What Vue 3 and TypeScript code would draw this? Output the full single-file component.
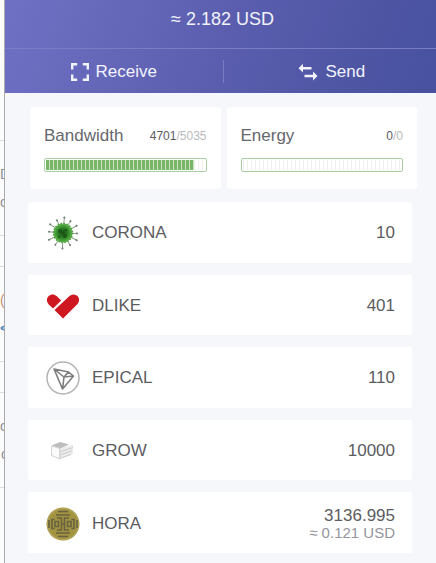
<script setup lang="ts">
interface Resource { name: string; used: number; total: number }
interface Token { name: string; balance: string; usd?: string }

const resources: Resource[] = [
  { name: 'Bandwidth', used: 4701, total: 5035 },
  { name: 'Energy', used: 0, total: 0 },
]

const tokens: Token[] = [
  { name: 'CORONA', balance: '10' },
  { name: 'DLIKE', balance: '401' },
  { name: 'EPICAL', balance: '110' },
  { name: 'GROW', balance: '10000' },
  { name: 'HORA', balance: '3136.995', usd: '≈ 0.121 USD' },
]

const percent = (r: Resource): number => (r.total ? (r.used / r.total) * 100 : 0)
const spikes: number[] = [5, 32, 62, 92, 118, 150, 182, 213, 244, 275, 304, 334]
</script>

<template>
  <div class="page">
    <div class="behind" aria-hidden="true">
      <div class="strip head"></div>
      <div class="strip tall"><span>D</span><span>c</span></div>
      <div class="strip short"></div>
      <div class="strip tall"><span class="orange">(</span><span class="blue">&lt;</span></div>
      <div class="strip short"></div>
      <div class="strip tall"><span>os</span><span class="inset">c</span></div>
      <div class="strip rest"></div>
    </div>

    <main class="panel">
      <header class="header">
        <div class="total">≈ 2.182 USD</div>
        <nav class="actions">
          <button type="button" class="action">
            <svg width="18" height="18" viewBox="0 0 18 18" fill="none" stroke="currentColor" stroke-width="2.400">
              <path d="M1.200 6.500V1.200h5M11.800 1.200h5v5.300M16.800 11.500v5.300h-5M6.200 16.800h-5v-5.300" />
            </svg>
            <span>Receive</span>
          </button>
          <button type="button" class="action">
            <svg width="20" height="18" viewBox="0 0 20 18" fill="currentColor">
              <path d="M.5 5.200 5 .8v3.200h8.500v2.400H5v3.200zM19.500 13l-4.500 4.400v-3.200H6.500v-2.400H15V8.600z" />
            </svg>
            <span>Send</span>
          </button>
        </nav>
      </header>

      <section class="resources">
        <article v-for="r in resources" :key="r.name" class="resource">
          <div class="resource-head">
            <h2>{{ r.name }}</h2>
            <div class="usage"><b>{{ r.used }}</b>/{{ r.total }}</div>
          </div>
          <div class="meter" role="progressbar" :aria-label="r.name" :aria-valuenow="r.used" :aria-valuemax="r.total">
            <div class="track"><div class="fill" :style="{ width: percent(r) + '%' }"></div></div>
          </div>
        </article>
      </section>

      <ul class="tokens">
        <li v-for="t in tokens" :key="t.name" class="token">
          <svg v-if="t.name === 'CORONA'" class="icon" viewBox="0 0 34 34">
            <defs>
              <radialGradient id="virus">
                <stop offset="0" stop-color="#174d12" />
                <stop offset=".55" stop-color="#2f8426" />
                <stop offset="1" stop-color="#62b84f" />
              </radialGradient>
            </defs>
            <g stroke="#83977f" stroke-width=".9" fill="#6d7a70">
              <g v-for="(a, i) in spikes" :key="a" :transform="`rotate(${a} 17 17)`">
                <path :d="i % 2 ? 'M17 8V3' : 'M17 8V1'" />
                <circle cx="17" :cy="i % 2 ? 3 : 1.500" r="1" stroke="none" />
              </g>
            </g>
            <circle cx="17" cy="17" r="9.500" fill="url(#virus)" />
            <circle cx="17" cy="17" r="9.500" fill="none" stroke="#4c9b3b" stroke-width="1.500" stroke-dasharray="1.500 1.500" />
            <g fill="#0f360d" opacity=".45">
              <circle cx="14" cy="15" r="2" /><circle cx="20" cy="14" r="1.500" />
              <circle cx="19" cy="20" r="2" /><circle cx="13" cy="21" r="1.200" />
            </g>
          </svg>
          <svg v-else-if="t.name === 'DLIKE'" class="icon" viewBox="0 0 34 34">
            <path fill="#ce1720" d="M17 29.500 8.500 21 23.500 7a5.800 5.800 0 0 1 8 0c2.300 2.400 2 6-.2 8.300z" />
            <path fill="#ce1720" d="M7 19.500 2.600 15.200C.3 12.900.3 9.300 2.600 7c2.200-2.100 5.800-2.100 8 0l4.600 4.500z" />
          </svg>
          <svg v-else-if="t.name === 'EPICAL'" class="icon" viewBox="0 0 34 34" fill="none" stroke-linejoin="round">
            <circle cx="17" cy="17" r="16" stroke="#b3b3b3" stroke-width="1.500" />
            <path d="M8 8 22.500 11 27.500 15 16.500 28zM8 8l10 8 9.500-1M22.500 11 18 16l-1.500 12" stroke="#7d7d7d" stroke-width="1.600" />
          </svg>
          <svg v-else-if="t.name === 'GROW'" class="icon" viewBox="0 0 34 34">
            <path fill="#bdbdbd" d="M5.500 11.500 14 8l9 2.500-8.500 4z" />
            <path fill="#fafafa" stroke="#d3d3d3" stroke-width="1" d="M5.500 12 14 14.500v10.500l-8.500-3.500z" />
            <path fill="#ececec" d="M14 14.500 27 10.500v9.500L14 25z" />
            <path fill="none" stroke="#c5c5c5" stroke-width=".9" d="M14 14.500V25M15 17.500l12-4M15 20.500l11-3.500M15 24l10-3.500" />
          </svg>
          <svg v-else class="icon" viewBox="0 0 34 34">
            <circle cx="17" cy="17" r="16.500" fill="#a39442" />
            <circle cx="17" cy="17" r="15.700" fill="none" stroke="#b9ab62" stroke-width=".9" />
            <g fill="none" stroke="#686240" stroke-width="1.600">
              <path d="M12 4.500h10M12 29.500h10M10 8h14M10 26h14M11 11h4.500v12H11M23 11h-4.500v12H23M15.500 17h3" />
              <path d="M8.500 12.500H6v9h2.500M25.500 12.500H28v9h-2.500M9 14.500h3.500v5H9zM21.500 14.500H25v5h-3.500zM3 13v8M31 13v8" />
            </g>
          </svg>
          <span class="name">{{ t.name }}</span>
          <span class="amount">
            <span class="balance">{{ t.balance }}</span>
            <span v-if="t.usd" class="usd">{{ t.usd }}</span>
          </span>
        </li>
      </ul>
    </main>
  </div>
</template>

<style>
body {
  margin: 0;
}
</style>

<style scoped>
.page {
  display: grid;
  grid-template-columns: 5px minmax(0, 1fr);
  min-height: 100vh;
  background: #f5f7fa;
  font-family: "Liberation Sans", Arial, sans-serif;
  color: #5b5c61;
}

.behind {
  display: flex;
  flex-direction: column;
  overflow: hidden;
  box-sizing: border-box;
  border-right: 1px solid #a9abaf;
  background: #fcfcfd;
  font-size: 14px;
  color: #8c8e93;
}

.strip {
  display: flex;
  flex-direction: column;
  justify-content: center;
  gap: 12px;
  box-sizing: border-box;
  border-bottom: 1px solid #d9dbde;
  line-height: 16px;
}

.head { height: 141px; }
.tall { height: 95px; }
.short { height: 31px; }
.rest { flex: 1; border-bottom: 0; }
.inset { padding-left: 1px; }
.orange { color: #c78f68; }
.blue { color: #4c88bf; font-weight: 700; }

.panel {
  display: flex;
  flex-direction: column;
  overflow: hidden;
}

.header {
  margin-right: -4px;
  background: linear-gradient(110deg, #6f72c4 0%, #5d5fb0 45%, #5057a5 75%, #4751a0 100%);
  color: #f2f3fc;
}

.total {
  padding: 8px 0 18px;
  font-size: 18px;
  line-height: 22px;
  text-align: center;
}

.actions {
  display: grid;
  grid-template-columns: 1fr 1fr;
  padding: 11px 0 10px;
  border-top: 1px solid #7a7dc4;
}

.action {
  display: flex;
  align-items: center;
  justify-content: center;
  gap: 7px;
  height: 23px;
  padding: 0;
  border: 0;
  background: none;
  color: inherit;
  font: inherit;
  font-size: 17px;
  cursor: pointer;
}

.action + .action {
  border-left: 1px solid #777bc0;
}

.resources {
  display: grid;
  grid-template-columns: 1fr 1fr;
  gap: 6px;
  padding: 14px 19px 13px 25px;
}

.resource {
  padding: 17px 14px;
  border-radius: 3px;
  background: #fff;
}

.resource-head {
  display: flex;
  align-items: center;
  justify-content: space-between;
  margin-bottom: 11px;
}

h2 {
  margin: 0;
  font-size: 17px;
  font-weight: 400;
  line-height: 23px;
  color: #66676c;
}

.usage {
  font-size: 12px;
  color: #b9babd;
}

.usage b {
  font-weight: 400;
  color: #5b5c61;
}

.meter {
  padding: 1px;
  border: 1px solid #a9cfa0;
  border-radius: 2px;
}

.track {
  height: 10px;
  background: repeating-linear-gradient(90deg, #efefef 0 1px, #fff 1px 4px);
}

.fill {
  height: 100%;
  background: repeating-linear-gradient(90deg, #7bb56a 0 3px, #c9e5c0 3px 4px);
}

.tokens {
  display: flex;
  flex: 1;
  flex-direction: column;
  gap: 12px;
  margin: 0;
  padding: 0 24px 10px 23px;
  list-style: none;
}

.token {
  display: flex;
  flex: 1;
  align-items: center;
  box-sizing: border-box;
  min-height: 60px;
  padding: 2px 17px 0 18px;
  border-radius: 3px;
  background: #fff;
  font-size: 17px;
  line-height: 18px;
}

.icon {
  width: 34px;
  height: 34px;
  margin-right: 12px;
}

.amount {
  display: flex;
  flex: 1;
  flex-direction: column;
  align-items: flex-end;
}

.usd {
  font-size: 15px;
  line-height: 16px;
  color: #94959d;
}
</style>
